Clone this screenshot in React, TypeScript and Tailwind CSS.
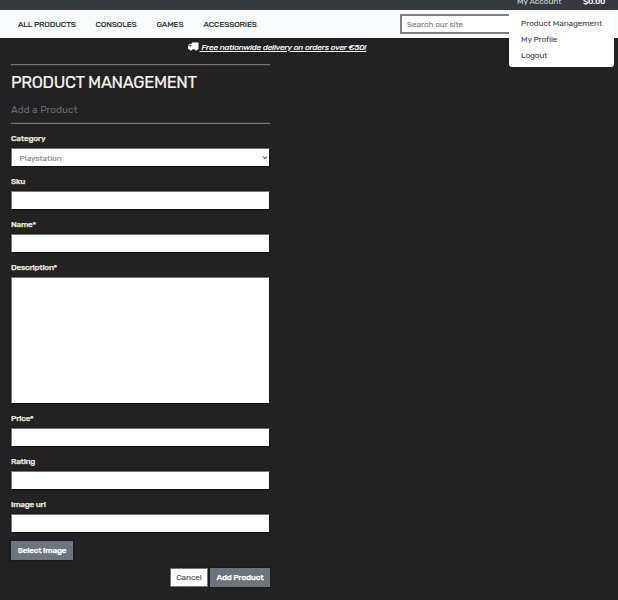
const field =
  "block w-[259px] appearance-none rounded-none border border-t-[#777] border-l-[#777] border-r-[#1a1a1a] border-b-[#111] bg-white shadow-[0_0_1px_#111] outline-none";

function Label({ text, tracking }: { text: string; tracking: string }) {
  return (
    <label className={`block h-[15px] text-[8.2px] leading-[10px] font-medium whitespace-nowrap text-[#e8e8de] [-webkit-text-stroke:0.25px_#e8e8de] ${tracking}`}>
      {text}
    </label>
  );
}

function TextField({ text, tracking }: { text: string; tracking: string }) {
  return (
    <div className="h-[43px]">
      <Label text={text} tracking={tracking} />
      <input className={`${field} h-[19px]`} />
    </div>
  );
}

function Truck() {
  return (
    <svg viewBox="0 0 11 9" className="mr-px h-[9px] w-[10.5px]" fill="currentColor">
      <path
        fillRule="evenodd"
        d="M4.4.3H10.6Q11 .3 11 .7V7.3H0V5.2L.5 3.2 2 1.7H4.1V.6ZM2.3 2.6 1.2 3.8V4.3H3.5V2.6Z"
      />
      <circle cx="3" cy="7.3" r="1.4" />
      <circle cx="8.5" cy="7.3" r="1.4" />
    </svg>
  );
}

export default function App() {
  return (
    <div className="relative h-[600px] w-[618px] overflow-hidden bg-[#222] font-[Rubik,Roboto,'Liberation_Sans',sans-serif]">
      <header className="relative flex h-[10px] overflow-hidden bg-[#343a40] text-[8.2px] leading-[10px] whitespace-nowrap text-[#d6d8da]">
        <div className="-mt-[12px] -ml-[11px] h-[14px] w-[528px] overflow-hidden text-[13px] leading-[16px] font-medium text-[#b5b0a5]">NLEY</div>
        <span className="-mt-[4px] w-[66px] tracking-[-0.05px]">My Account</span>
        <span className="-mt-[4px] font-medium tracking-[-0.25px] text-white">$0.00</span>
      </header>

      <nav className="flex h-[28px] items-center bg-[#f8fcff] pl-[18px] text-[8.2px] font-normal whitespace-nowrap text-[#222] [-webkit-text-stroke:0.15px_#222]">
        <a className="w-[77.5px] tracking-[-0.13px]">ALL PRODUCTS</a>
        <a className="w-[61px] tracking-[-0.13px]">CONSOLES</a>
        <a className="w-[47px] tracking-[-0.12px]">GAMES</a>
        <a className="w-[196.5px] tracking-[-0.13px]">ACCESSORIES</a>
        <input
          placeholder="Search our site"
          className="h-[20px] w-[150px] rounded-none border-2 border-[#808080] bg-white px-[5px] text-[8.2px] font-normal tracking-[-0.08px] outline-none [-webkit-text-stroke:0px] placeholder:text-[#6c757d]"
        />
      </nav>

      <div className="absolute top-[10px] left-[509px] h-[57px] w-[104.5px] rounded-b-[3px] bg-white pt-[5px] pl-[12px] text-[8.2px] leading-[16px] whitespace-nowrap text-[#343a40]">
        <div className="tracking-[-0.08px]">Product Management</div>
        <div className="tracking-[-0.12px]">My Profile</div>
        <div className="tracking-[-0.08px]">Logout</div>
      </div>

      <div className="flex h-[26px] items-start pt-[4px] pl-[188px] text-white">
        <Truck />
        <span className="text-[8.2px] leading-[11px] font-normal tracking-[-0.12px] whitespace-pre italic underline [-webkit-text-stroke:0.2px_white]"> Free nationwide delivery on orders over €50!</span>
      </div>

      <main className="ml-[11px] w-[259px]">
        <hr className="h-px border-0 bg-[#777770] shadow-[0_1px_0_#333330]" />
        <h1 className="mt-[7px] h-[21px] text-[16.5px] leading-[21px] font-normal tracking-[-0.32px] whitespace-nowrap text-[#f5f5eb] [-webkit-text-stroke:0.2px_#f5f5eb]">PRODUCT MANAGEMENT</h1>
        <h2 className="mt-[10px] h-[14px] text-[10px] leading-[14px] font-normal tracking-[0.03px] text-[#646b73]">Add a Product</h2>
        <hr className="mt-[6px] h-px border-0 bg-[#777770] shadow-[0_-1px_0_#333330]" />

        <form className="mt-[9px]">
          <div className="h-[43px]">
            <Label text="Category" tracking="tracking-[-0.26px]" />
            <div className={`${field} flex h-[19px] items-center justify-between pr-[1px] pl-[7.5px] text-[#6c757d]`}>
              <span className="pt-px text-[8.2px] leading-[11px] tracking-[-0.06px]">Playstation</span>
              <svg viewBox="0 0 7 7" className="size-[6px]" fill="none" stroke="#666" strokeWidth="1.3">
                <path d="M1.2 2 3.5 4.3 5.8 2" />
              </svg>
            </div>
          </div>
          <TextField text="Sku" tracking="tracking-[-0.3px]" />
          <TextField text="Name*" tracking="tracking-[-0.25px]" />
          <div className="h-[151px]">
            <Label text="Description*" tracking="tracking-[-0.27px]" />
            <textarea className={`${field} h-[127px] resize-none`} />
          </div>
          <TextField text="Price*" tracking="tracking-[-0.25px]" />
          <TextField text="Rating" tracking="tracking-[-0.33px]" />
          <TextField text="Image url" tracking="tracking-[-0.25px]" />

          <button type="button" className="-mt-px block h-[19px] w-[62px] bg-[#6c757d] text-[8.2px] leading-[19px] font-medium tracking-[-0.22px] whitespace-nowrap text-white shadow-[0_0_1px_1px_#1b1c1d] [-webkit-text-stroke:0.25px_white]">
            Select Image
          </button>
          <div className="mt-[8px] flex justify-end gap-[2px]">
            <button type="button" className="h-[19px] w-[38px] border border-[#777] bg-white text-[8.2px] leading-[17px] tracking-[-0.08px] text-[#343a40] shadow-[0_0_1px_#111]">
              Cancel
            </button>
            <button type="button" className="h-[19px] w-[60px] bg-[#6c757d] text-[8.2px] leading-[19px] font-medium tracking-[-0.23px] whitespace-nowrap text-white shadow-[0_0_1px_1px_#1b1c1d] [-webkit-text-stroke:0.25px_white]">
              Add Product
            </button>
          </div>
        </form>
      </main>
    </div>
  );
}
